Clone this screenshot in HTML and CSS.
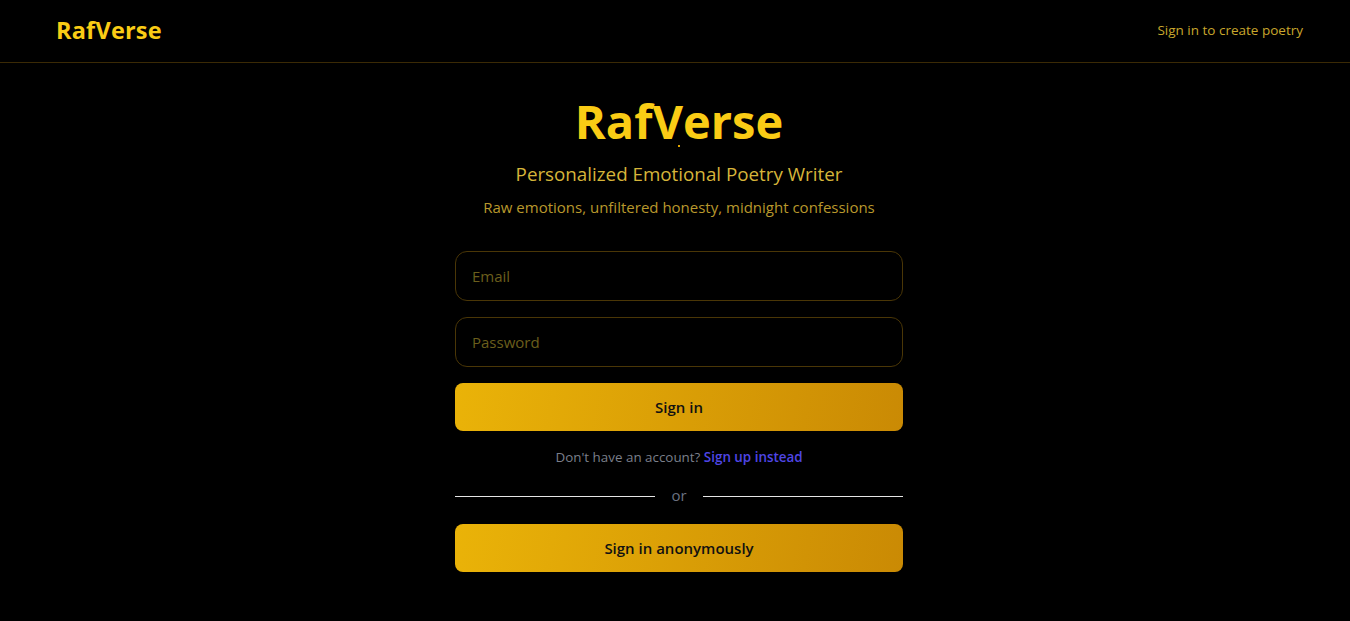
FILE: index.html
```html
<!DOCTYPE html>
<html lang="en">
<head>
<meta charset="utf-8">
<title>RafVerse</title>
<link rel="stylesheet" href="styles.css">
</head>
<body>
<header class="topbar">
  <div class="brand">RafVerse</div>
  <div class="hint">Sign in to create poetry</div>
</header>
<main class="main">
  <section class="hero">
    <h1 class="title">RafVerse</h1>
    <span class="dot"></span>
    <p class="subtitle">Personalized Emotional Poetry Writer</p>
    <p class="tagline">Raw emotions, unfiltered honesty, midnight confessions</p>
  </section>
  <form class="form">
    <input class="field" type="email" placeholder="Email">
    <input class="field" type="password" placeholder="Password">
    <button class="btn" type="button">Sign in</button>
    <p class="switch">Don't have an account? <a class="link">Sign up instead</a></p>
    <div class="divider"><span class="line"></span><span class="or">or</span><span class="line"></span></div>
    <button class="btn" type="button">Sign in anonymously</button>
  </form>
</main>
</body>
</html>
```
FILE: styles.css
```css
* { box-sizing: border-box; }
html, body { margin: 0; padding: 0; background: #000; }
body {
  font-family: "Open Sans", "Noto Sans", "Liberation Sans", sans-serif;
  color: #facc15;
  height: 621px;
  overflow: hidden;
}
.topbar {
  height: 63px;
  display: flex;
  align-items: center;
  justify-content: space-between;
  padding: 0 47px 2px 56px;
  border-bottom: 1px solid #3b2a05;
}
.brand {
  font-size: 23.5px;
  font-weight: 700;
  color: #facc15;
  letter-spacing: 0.2px;
}
.hint {
  font-size: 13.5px;
  color: #c9a72c;
}
.main {
  display: flex;
  flex-direction: column;
  align-items: center;
  padding-left: 8px;
}
.hero {
  display: flex;
  flex-direction: column;
  align-items: center;
  padding-top: 30px;
}
.title {
  margin: 0;
  font-size: 47px;
  line-height: 56px;
  font-weight: 700;
  color: #facc15;
}
.dot {
  width: 2px;
  height: 2px;
  background: #e0a400;
  margin: -4px 0 0;
}
.subtitle {
  margin: 14px 0 0;
  font-size: 18.8px;
  line-height: 26px;
  color: #d6b53a;
}
.tagline {
  margin: 9px 0 0;
  font-size: 15px;
  line-height: 22px;
  color: #b8982c;
}
.form {
  width: 448px;
  margin-top: 33px;
  display: flex;
  flex-direction: column;
}
.field {
  height: 50px;
  margin-bottom: 16px;
  padding: 0 16px;
  background: #000;
  border: 1px solid #4a3606;
  border-radius: 12px;
  font-family: inherit;
  font-size: 15px;
  color: #facc15;
  outline: none;
}
.field::placeholder { color: #6b5e1c; }
.btn {
  height: 48px;
  border: none;
  border-radius: 8px;
  background: linear-gradient(100deg, #eab308 0%, #ca8a04 100%);
  font-family: inherit;
  font-size: 15px;
  font-weight: 600;
  color: #111;
  cursor: pointer;
}
.switch {
  margin: 18px 0 0;
  text-align: center;
  font-size: 13.4px;
  line-height: 16px;
  color: #7b7f8a;
}
.link {
  color: #4f46e5;
  font-weight: 600;
}
.divider {
  margin: 21px 0 18px;
  height: 20px;
  display: flex;
  align-items: center;
  gap: 16px;
}
.line {
  flex: 1;
  height: 1px;
  background: #e5e5e5;
}
.or {
  font-size: 15px;
  color: #6b7280;
  padding: 0 0 2px;
}
```
